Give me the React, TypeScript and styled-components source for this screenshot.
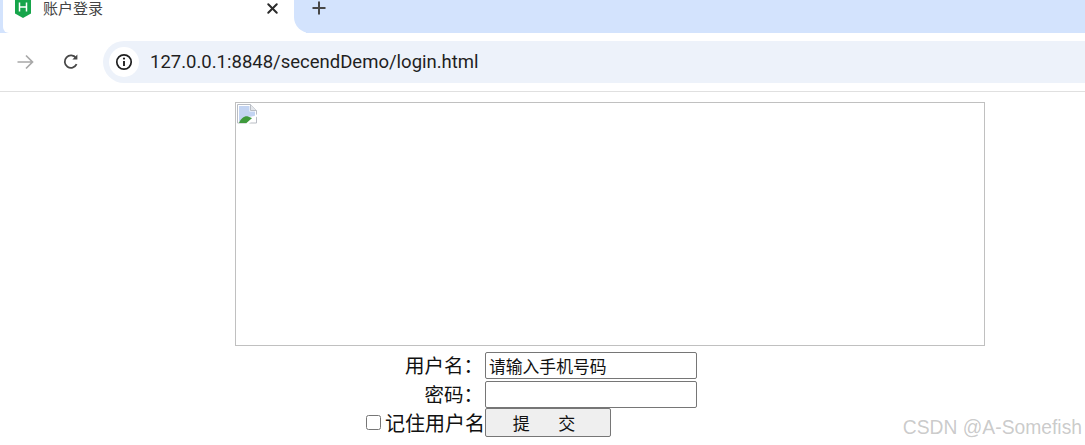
import styled, { createGlobalStyle } from "styled-components";
import { FiX } from "react-icons/fi";

const CJK = `"Liberation Sans", "Noto Sans CJK SC", sans-serif`;

const GlobalStyle = createGlobalStyle`
  html, body {
    margin: 0;
    padding: 0;
    background: #fff;
    overflow: hidden;
  }
  body {
    font-family: ${CJK};
  }
`;

const App = () => {
  return (
    <Window>
      <GlobalStyle />
      <TabStrip>
        <Tab>
          <Favicon viewBox="0 0 16 18">
            <path d="M0 0h16v13.500l-8 4.500-8-4.500z" fill="#16a54a" />
            <path d="M4.500 2.500v9M11.500 2.500v9M4.500 7h7" stroke="#fff" strokeWidth="1.5" fill="none" />
          </Favicon>
          <TabTitle>账户登录</TabTitle>
          <CloseIcon />
        </Tab>
        <NewTab>
          <svg width="14" height="14" viewBox="0 0 14 14" stroke="#474747" strokeWidth="2" fill="none">
            <path d="M7 .5v13M.5 7h13" />
          </svg>
        </NewTab>
      </TabStrip>

      <Toolbar>
        <NavButton>
          <svg width="20" height="20" viewBox="0 0 20 20" fill="none" stroke="#a8a8a8" strokeWidth="1.7">
            <path d="M2.500 10h15M11 3.500l6.500 6.500-6.500 6.500" />
          </svg>
        </NavButton>
        <NavButton>
          <svg width="20" height="20" viewBox="0 0 20 20" fill="none" stroke="#474747" strokeWidth="1.8">
            <path d="M15.600 12.200a6.200 6.200 0 1 1-.6-6.200" />
            <path d="M16.400 2.600v5h-5z" fill="#474747" stroke="none" />
          </svg>
        </NavButton>
        <AddressBar>
          <InfoBadge>
            <svg width="18" height="18" viewBox="0 0 18 18" fill="none">
              <circle cx="9" cy="9" r="7.200" stroke="#1f1f1f" strokeWidth="1.700" />
              <path d="M9 8v5" stroke="#1f1f1f" strokeWidth="1.900" />
              <circle cx="9" cy="5.600" r="1.100" fill="#1f1f1f" />
            </svg>
          </InfoBadge>
          <Url>127.0.0.1:8848/secendDemo/login.html</Url>
        </AddressBar>
      </Toolbar>

      <Page>
        <BrokenImage>
          <svg width="20" height="20" viewBox="0 0 20 20">
            <path d="M.5.5h13l6 6v12.500H.5z" fill="#fff" stroke="#b9bdc4" />
            <path d="M13.500.5v6h6" fill="#e4e7ec" stroke="#b9bdc4" />
            <path d="M2 2h10.500v5.500H18V12l-7 1-9 5z" fill="#c3d4f2" />
            <path d="M2 19c2-5 6-7.500 9-6.500l5 2-4 4.500z" fill="#3f9a3c" />
            <path d="M10 20l10-9" stroke="#fff" strokeWidth="2.200" />
          </svg>
        </BrokenImage>

        <Form>
          <Label>用户名：</Label>
          <TextInput defaultValue="请输入手机号码" />
          <Label>密码：</Label>
          <TextInput type="password" />
          <RememberLabel>
            <Check type="checkbox" />
            记住用户名
          </RememberLabel>
          <SubmitButton type="button">提&nbsp;&nbsp;&nbsp;&nbsp;&nbsp;&nbsp;交</SubmitButton>
        </Form>
      </Page>

      <Watermark>CSDN @A-Somefish</Watermark>
    </Window>
  );
};

export default App;

const Window = styled.div`
  position: relative;
  width: 1085px;
  height: 445px;
  background: #fff;
  overflow: hidden;
`;

const TabStrip = styled.div`
  display: flex;
  height: 33px;
  background: #d3e3fd;
  padding-left: 3px;
`;

const Tab = styled.div`
  width: 291px;
  height: 33px;
  box-sizing: border-box;
  background: #fff;
  display: flex;
  align-items: flex-start;
  padding: 0 12px 0 12px;
  border-radius: 0 0 0 6px;
  box-shadow: 12px 0 0 #fff;
`;

const Favicon = styled.svg`
  width: 16px;
  height: 18px;
  margin: 0 12px 0 0;
  flex: none;
`;

const TabTitle = styled.span`
  flex: 1;
  font-size: 15px;
  line-height: 17px;
  color: #444;
`;

const CloseIcon = styled(FiX)`
  width: 17px;
  height: 17px;
  stroke-width: 2.8;
  color: #2b2b2b;
  margin-right: 1px;
`;

const NewTab = styled.div`
  flex: 1;
  height: 33px;
  box-sizing: border-box;
  padding: 1px 0 0 18px;
  background: #d3e3fd;
  border-radius: 0 0 0 16px;
  line-height: 0;
`;

const Toolbar = styled.div`
  height: 59px;
  box-sizing: border-box;
  background: #fff;
  border-bottom: 1px solid #e0e0e0;
  display: flex;
  align-items: center;
  padding: 0 0 0 15px;
`;

const NavButton = styled.div`
  width: 20px;
  height: 20px;
  margin-right: 26px;
  &:nth-child(2) {
    margin-right: 22px;
  }
`;

const AddressBar = styled.div`
  flex: 1;
  height: 42px;
  background: #edf2fa;
  border-radius: 21px 0 0 21px;
  display: flex;
  align-items: center;
  padding-left: 6px;
`;

const InfoBadge = styled.div`
  width: 30px;
  height: 30px;
  border-radius: 50%;
  background: #fff;
  display: flex;
  align-items: center;
  justify-content: center;
  margin-right: 11px;
`;

const Url = styled.span`
  font-family: "Roboto", sans-serif;
  font-size: 18.5px;
  color: #1f1f1f;
`;

const Page = styled.main`
  padding: 10px 0 0 235px;
`;

const BrokenImage = styled.div`
  width: 750px;
  height: 244px;
  box-sizing: border-box;
  border: 1px solid #c0c0c0;
  padding: 1px;
  line-height: 0;
  margin-bottom: 6px;
`;

const Form = styled.form`
  display: grid;
  grid-template-columns: 250px 212px;
  grid-template-rows: 27px 27px 29px;
  row-gap: 2px;
`;

const Label = styled.label`
  font-size: 19.5px;
  line-height: 29px;
  color: #111;
  text-align: right;
  padding-right: 2px;
  white-space: nowrap;
`;

const TextInput = styled.input`
  box-sizing: border-box;
  width: 212px;
  height: 27px;
  margin: 0;
  padding: 0 3px;
  border: 1px solid #767676;
  border-radius: 2px;
  font-family: ${CJK};
  font-size: 16.8px;
  color: #111;
  outline: none;
`;

const RememberLabel = styled.label`
  display: flex;
  align-items: center;
  justify-content: flex-end;
  font-size: 20px;
  line-height: 29px;
  color: #111;
  margin-top: -1px;
  white-space: nowrap;
`;

const Check = styled.input`
  width: 15px;
  height: 15px;
  margin: -3px 4px 0 0;
`;

const SubmitButton = styled.button`
  box-sizing: border-box;
  width: 126px;
  height: 29px;
  margin: -2px 0 0;
  padding: 0 8px 0 0;
  border: 1px solid #767676;
  border-radius: 2px;
  background: #efefef;
  font-family: ${CJK};
  font-size: 17px;
  color: #111;
`;

const Watermark = styled.div`
  position: absolute;
  right: 3px;
  bottom: 6px;
  font-family: "Liberation Sans", sans-serif;
  font-size: 19.3px;
  color: rgba(120, 120, 120, 0.4);
`;
